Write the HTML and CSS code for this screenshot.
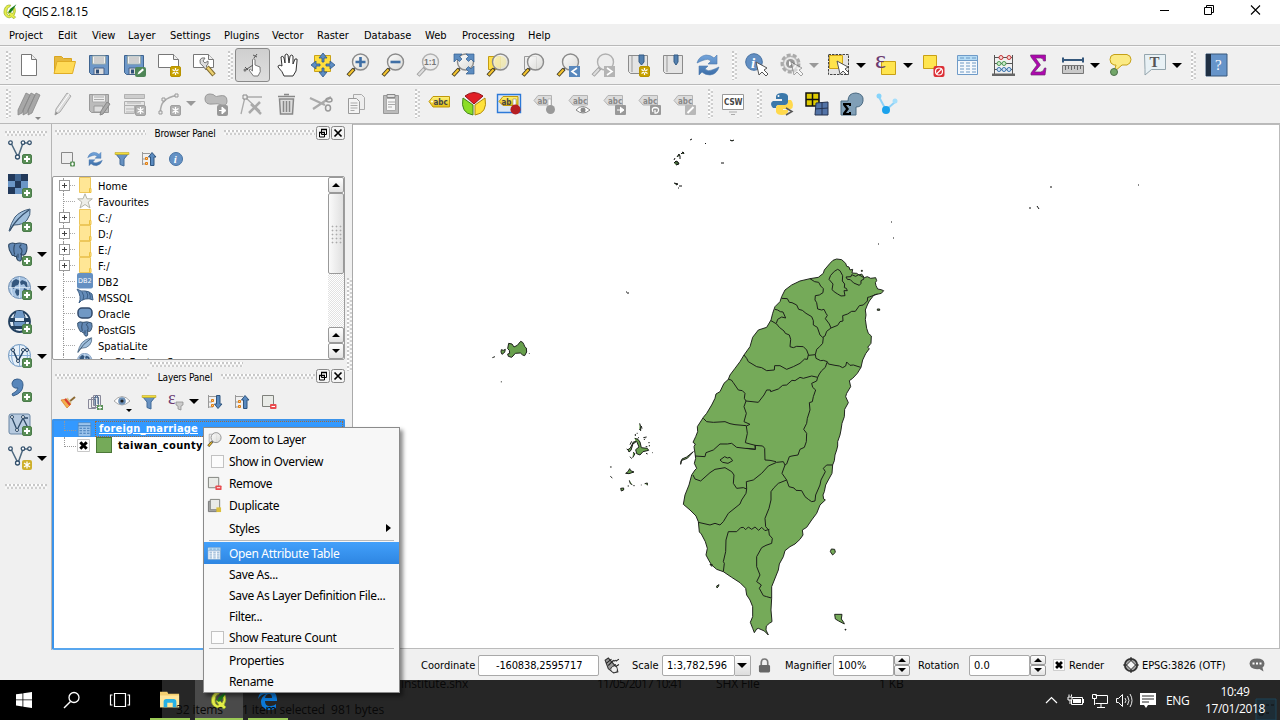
FILE: index.html
```html
<!DOCTYPE html>
<html lang="en">
<head>
<meta charset="utf-8">
<title>QGIS 2.18.15</title>
<link rel="stylesheet" href="styles.css">
</head>
<body>
<svg class="defs" width="0" height="0">
<defs>
<linearGradient id="gGlass" x1="0" y1="0" x2="1" y2="1"><stop offset="0" stop-color="#fff"/><stop offset="1" stop-color="#d4d4d0"/></linearGradient>
<linearGradient id="gTag" x1="0" y1="0" x2="0" y2="1"><stop offset="0" stop-color="#fff27a"/><stop offset="1" stop-color="#e2bd12"/></linearGradient>
<linearGradient id="gArr" x1="0" y1="0" x2="0" y2="1"><stop offset="0" stop-color="#74a5dc"/><stop offset="1" stop-color="#3c6ea8"/></linearGradient>
<symbol id="plus" viewBox="0 0 24 24"><rect x="14.500" y="14.500" width="9" height="9" rx="1.500" fill="#5a8f57" stroke="#4a7c4a"/><path d="M19 16v6M16 19h6" stroke="#fff" stroke-width="2"/></symbol>
<symbol id="star" viewBox="0 0 24 24"><rect x="13.500" y="13.500" width="10" height="10" rx="1.500" fill="#c8a200" stroke="#b89300"/><path d="M18.500 15v7M15.500 16.500l6 4M21.500 16.500l-6 4" stroke="#fff" stroke-width="1.300"/><circle cx="18.500" cy="18.500" r="1" fill="#c8a200"/></symbol>
<symbol id="starg" viewBox="0 0 24 24"><rect x="13.500" y="13.500" width="10" height="10" rx="1.500" fill="#b0b0b0" stroke="#a0a0a0"/><path d="M18.500 15v7M15.500 16.500l6 4M21.500 16.500l-6 4" stroke="#fff" stroke-width="1.300"/></symbol>
<symbol id="loupe" viewBox="0 0 24 24"><path d="M9.500 14.500L7 17" stroke="#444" stroke-width="2"/><path d="M8 16L2 22.500" stroke="#453c20" stroke-width="4"/><path d="M7.500 16.500L2.500 22" stroke="#f4c430" stroke-width="2"/><circle cx="14.500" cy="9" r="8" fill="url(#gGlass)" fill-opacity=".8" stroke="#8b8b8b" stroke-width="1.400"/></symbol>
<symbol id="loupeg" viewBox="0 0 24 24"><path d="M9.500 14.500L2 22.500" stroke="#a0a0a0" stroke-width="4"/><path d="M8 16L2.500 22" stroke="#ddd" stroke-width="2"/><circle cx="14.500" cy="9" r="8" fill="#ededed" stroke="#b0b0b0" stroke-width="1.400"/></symbol>
<symbol id="cursor" viewBox="0 0 24 24"><path d="M11 9l3 13 3-3 4 4 2-2-4-4 3-2z" fill="#fff" stroke="#555"/></symbol>
<symbol id="tag" viewBox="0 0 24 24"><path d="M2 10.500L6 5.500H22.500V16H6z" fill="url(#gTag)" stroke="#c0980a"/><circle cx="5" cy="10.500" r="1" fill="#fff"/></symbol>
<symbol id="tagg" viewBox="0 0 24 24"><path d="M2 8.500L6 3.500H20.500V13H6z" fill="#dcdcdc" stroke="#b4b4b4"/><text x="6" y="11.500" class="tagtext grey">abc</text></symbol>
<symbol id="floppy" viewBox="0 0 24 24"><path d="M2.500 2.500h19v19h-17l-2-2z" fill="#6d97c8" stroke="#3f6490"/><path d="M5.500 3h13v8h-13z" fill="#f2f2f2" stroke="#9aa"/><path d="M7 5h10M7 7h10M7 9h10" stroke="#999" stroke-width=".8"/><path d="M7 15h10v6.500H7z" fill="#ddd" stroke="#46618a"/><path d="M9 16.500h3v4H9z" fill="#304f78"/></symbol>
<symbol id="nodes" viewBox="0 0 24 24"><path d="M3 3l7 14 5-14h6" fill="none" stroke="#4f6a80" stroke-width="1.500"/><g fill="#fff" stroke="#33506c" stroke-width="1.300"><circle cx="2.500" cy="2.700" r="1.800"/><circle cx="15" cy="2.700" r="1.800"/><circle cx="21.500" cy="2.700" r="1.800"/><circle cx="9.500" cy="17" r="2"/></g></symbol>
<symbol id="elephant" viewBox="0 0 24 24"><path d="M1 3Q4 0 9 2q6-2 13 1 2 5-1 11-2 3-5 1v6q-1 3-4 1-2-2-2-5-2 1-3-1-2 1-3-2Q0 8 1 3z" fill="#6389b5" stroke="#2c4763" stroke-width="1.300"/><path d="M8 3q-2 6 0 12M16 3q-4 3 0 5 2 4-1 7M12 14v5" fill="none" stroke="#2f4966" stroke-width="1.300"/></symbol>
<symbol id="feather" viewBox="0 0 24 24"><path d="M1 23q2-8 6-14Q12 3 22 1q1 6-3 11-4 5-13 5-3 3-4 6z" fill="#9fbedb" stroke="#3f5b77"/><path d="M2 22Q9 10 21 2" fill="none" stroke="#36516e" stroke-width="1.300"/></symbol>
<symbol id="globe" viewBox="0 0 24 24"><circle cx="11.500" cy="11.500" r="11" fill="#a9c5e3" stroke="#7290b3"/><path d="M3 6l5-3 4 2-2 4-3 1-1 3-3-2zM14 4l5 2 2 6-3-1-2-3-3 1-1-3zM8 13l4 1-1 5-2 1-2-4zM16 12l4 2-2 5-3-3z" fill="#34577e"/><path d="M1 11.500h21M11.500 1v21M5 3q-4 8 0 17M18 3q4 8 0 17" stroke="#e3edf7" stroke-width=".7" fill="none"/></symbol>
<symbol id="grid" viewBox="0 0 24 24"><path d="M1.500 2.500h20v19h-20z" fill="#f4f8fc" stroke="#6f9bc8"/><path d="M2 3h19v4H2z" fill="#b5dcf5"/><path d="M2 7.500h19" stroke="#6f9bc8"/><path d="M4 10h4M10 10h4M16 10h4M4 13h4M10 13h4M16 13h4M4 16h4M10 16h4M16 16h4M4 19h4M10 19h4M16 19h4M4 5h4M10 5h4M16 5h4" stroke="#6c98c4" stroke-width="1.200"/></symbol>
<symbol id="refresh" viewBox="0 0 24 24"><path d="M1 10q2-7 9-8 5 0 8 3l3-3v9h-9l3-3q-3-3-7-1-3 1-7 3zM23 14q-2 7-9 8-5 0-8-3l-3 3v-9h9l-3 3q3 3 7 1 3-1 7-3z" fill="url(#gArr)" stroke="#4d7aae" stroke-width=".6"/></symbol>
<symbol id="funnel" viewBox="0 0 16 16"><path d="M1.500 2.500h13L10 8v7l-4-1.500V8z" fill="#6791c1" stroke="#426b98"/><path d="M1 1.500h14v2H1z" fill="#f2dd39" stroke="#b69e18" stroke-width=".5"/></symbol>
<symbol id="treeup" viewBox="0 0 16 16"><path d="M1.500 1v13M2 2.500h7M2 8h3M2 13h4" stroke="#999" fill="none"/><path d="M4.500 6.500h2v2h-2zM4.500 11.500h2v2h-2z" fill="#ffd27a" stroke="#e07c14"/><path d="M9.500 14.500V6H7.500L11 1.500 15 6h-2v8.500z" fill="#5a8abf" stroke="#2f557f"/></symbol>
<symbol id="treedown" viewBox="0 0 16 16"><path d="M1.500 1v13M2 2.500h7M2 8h3M2 13h4" stroke="#999" fill="none"/><path d="M4.500 5.500h2v2h-2zM4.500 10.500h2v2h-2z" fill="#ffd27a" stroke="#e07c14"/><path d="M9.500 1.500V10H7.500l3.500 4.500L15 10h-2V1.500z" fill="#5a8abf" stroke="#2f557f"/></symbol>
<symbol id="folder" viewBox="0 0 16 16"><path d="M2.500 .5h11v15h-11z" fill="#ffe695" stroke="#edc75b"/><path d="M12.500 11.500h1.500v4h-1.500z" fill="#ffe695" stroke="#edc13e"/></symbol>
<symbol id="remove" viewBox="0 0 16 16"><path d="M1.500 1.500h11v11h-11z" fill="#e9ebe7" stroke="#7e807b"/><rect x="9" y="10" width="6.500" height="5" rx="1" fill="#e84b4f"/><path d="M10.500 12.500h3.500" stroke="#fff"/></symbol>
<symbol id="floatb" viewBox="0 0 14 14"><rect x=".5" y=".5" width="13" height="13" rx="2" fill="#f4f4f4" stroke="#888"/><path d="M5.500 3.500h5v5h-5zM3.500 6.500h5v4.500h-5z" fill="#f8f8f8" stroke="#000"/><path d="M5 3.500h6M3 6.500h6" stroke="#000" stroke-width="1.500"/></symbol>
<symbol id="closeb" viewBox="0 0 14 14"><rect x=".5" y=".5" width="13" height="13" rx="2" fill="#f4f4f4" stroke="#888"/><path d="M3.500 3.500l7 7M10.500 3.500l-7 7" stroke="#000" stroke-width="1.700"/></symbol>
<symbol id="check" viewBox="0 0 13 13"><path d="M.5.500h12v12H.5z" fill="#fff" stroke="#c8c8c8"/><path d="M3.300 3.300l6.400 6.400M9.700 3.300L3.300 9.700" stroke="#000" stroke-width="3"/></symbol>
<symbol id="qlogo" viewBox="0 0 20 20"><path d="M11 2Q5 1 3 7q-2 7 3 10 3 2 6 0l3 2 2-2-2-2q3-5 1-10l-2 2q1 4-1 6l-3-3-3 1 3 4q-4 1-4-5 0-5 4-6z" fill="#e6ec4a" stroke="#8fad25" stroke-width=".8"/><path d="M18 1l-5 8-3 3-2-1 2-4z" fill="#187b1c"/></symbol>
</defs>
</svg>

<div class="app">
<header class="titlebar">
<svg class="logo" viewBox="0 0 20 20"><use href="#qlogo"/></svg>
<span class="title">QGIS 2.18.15</span>
<svg class="winbtns" viewBox="0 0 110 24"><path d="M6 11.500h9" stroke="#000"/><path d="M50.500 8.500h7v7h-7zM52.500 8V6.500h7v7H58" fill="none" stroke="#000"/><path d="M97 6.500l9 9M106 6.500l-9 9" stroke="#000" stroke-width="1.100"/></svg>
</header>
<nav class="menubar">
<span style="width:49px">Project</span><span style="width:34px">Edit</span><span style="width:36px">View</span><span style="width:42px">Layer</span><span style="width:54px">Settings</span><span style="width:48px">Plugins</span><span style="width:45px">Vector</span><span style="width:47px">Raster</span><span style="width:61px">Database</span><span style="width:37px">Web</span><span style="width:66px">Processing</span><span>Help</span>
</nav>

<div class="toolbar">
<i class="grip first"></i>
<b><svg viewBox="0 0 24 24"><path d="M4.500 1.500h10l5 5v16h-15z" fill="#fff" stroke="#777"/><path d="M14.500 1.500v5h5" fill="#eee" stroke="#777"/></svg></b>
<b><svg viewBox="0 0 24 24"><path d="M2.500 20V3.500h7l2 2h8V10" fill="#e6b93e" stroke="#d9a520"/><path d="M2 20.500L5 8.500h18.500l-3 12z" fill="#ffdb58" stroke="#e0ad25"/></svg></b>
<b><svg viewBox="0 0 24 24"><use href="#floppy"/></svg></b>
<b><svg viewBox="0 0 24 24"><use href="#floppy"/><rect x="13" y="14" width="11" height="10" rx="2" fill="#4f8657"/><path d="M15.500 21.500l1-2.500 4-3.500 1.500 1.500-4 3.500z" fill="#fff"/></svg></b>
<b><svg viewBox="0 0 24 24"><path d="M1.500 1.500h15l5 5v8h-20z" fill="#fff" stroke="#777"/><path d="M16.500 1.500v5h5" fill="#eee" stroke="#777"/><use href="#star"/></svg></b>
<b><svg viewBox="0 0 24 24"><path d="M1.500 1.500h15l5 5v8h-20z" fill="#fff" stroke="#777"/><path d="M16.500 1.500v5h5" fill="#eee" stroke="#777"/><path d="M8 7q1-3 5-2l-2 3 2 2 3-2q1 4-2 5l2 2-2 2-3-4Q7 11 8 7z" fill="#ddd" stroke="#777"/><path d="M15 14l7 8" stroke="#7f6a2e" stroke-width="4.500"/><path d="M15.500 14.500l6 7" stroke="#ecd070" stroke-width="2.500"/></svg></b>
<i class="grip mid"></i>
<b class="on"><svg viewBox="0 0 24 24"><path d="M11.500 15V6.500q1.500-1.500 2.500 0V12l5 2q1.500 5-2 9h-4.500L8 17q1-2 3.500 1z" fill="#fff" stroke="#777"/><path d="M3 18l9-6M13 5l3-4M4 14l3 3M12 2l4 2" stroke="#555" stroke-width="1"/><circle cx="4" cy="17" r="1.500" fill="#777"/></svg></b>
<b><svg viewBox="0 0 24 24"><path d="M8 23q-1-4-6-9 0-3 4-1L5 4q2-2 3 1l1 5V2q2-2 3 0l1 8 1-7q2-2 3 0v8l2-5q3-1 2 2l-1 10-3 5z" fill="#fff" stroke="#333"/></svg></b>
<b><svg viewBox="0 0 24 24"><path d="M3.500 2.500h16v16h-16z" fill="#ffdf3d" stroke="#c9a21a"/><path d="M12 0l4 5h-3v4h-2V5H8zM12 24l4-5h-3v-4h-2v4H8zM0 12l5-4v3h4v2H5v3zM24 12l-5-4v3h-4v2h4v3z" fill="#5c8dc4" stroke="#2d5788" stroke-width=".8"/></svg></b>
<b><svg viewBox="0 0 24 24"><use href="#loupe"/><path d="M14.500 4v10M9.500 9h10" stroke="#3f6fa5" stroke-width="2.600"/></svg></b>
<b><svg viewBox="0 0 24 24"><use href="#loupe"/><path d="M9.500 9h10" stroke="#3f6fa5" stroke-width="2.600"/></svg></b>
<b><svg viewBox="0 0 24 24"><use href="#loupeg"/><text x="8" y="12" class="one">1:1</text></svg></b>
<b><svg viewBox="0 0 24 24"><use href="#loupe"/><path d="M3 1h8L8.500 3.500 11 6 8.500 8.500 6 6 3 9zM23 1v8l-3-3-2.500 2.500L15 6l2.500-2.500L15 1zM23 21v-8l-3 3-2.500-2.500L15 16l2.500 2.500L15 21z" fill="#5c8cc0" stroke="#315c8c" stroke-width=".7"/></svg></b>
<b><svg viewBox="0 0 24 24"><path d="M2.500 3.500h12v13h-12z" fill="#ffe04b" stroke="#c39c12"/><use href="#loupe"/><circle cx="14.500" cy="9" r="6" fill="#f7e98c" opacity=".5"/></svg></b>
<b><svg viewBox="0 0 24 24"><path d="M3.500 3.500h12v13h-12z" fill="#eee" stroke="#999"/><use href="#loupe"/></svg></b>
<b><svg viewBox="0 0 24 24"><use href="#loupe"/><path d="M13 13h11v11H13z" fill="#5988bd"/><path d="M21 15l-5 3.500 5 3.500" fill="none" stroke="#fff" stroke-width="1.600"/></svg></b>
<b><svg viewBox="0 0 24 24"><use href="#loupeg"/><path d="M13 13h11v11H13z" fill="#b4b4b4"/><path d="M16 15l5 3.500-5 3.500" fill="none" stroke="#fff" stroke-width="1.600"/></svg></b>
<b><svg viewBox="0 0 24 24"><path d="M2.500 2.500h19v18h-17l-2-2z" fill="#e4e4e4" stroke="#8b8b8b"/><path d="M6 3v16" stroke="#999"/><path d="M13 2h5v7l-2.500 3L13 9z" fill="#527fae" stroke="#345c86"/><use href="#star"/></svg></b>
<b><svg viewBox="0 0 24 24"><path d="M2.500 2.500h19v18h-17l-2-2z" fill="#e4e4e4" stroke="#8b8b8b"/><path d="M6 3v16" stroke="#999"/><path d="M13 2h4v7l-2 3-2-3z" fill="#527fae" stroke="#345c86"/></svg></b>
<b><svg viewBox="0 0 24 24"><use href="#refresh"/></svg></b>
<i class="grip mid"></i>
<b><svg viewBox="0 0 24 24"><circle cx="9" cy="9" r="8.300" fill="#628fc3" stroke="#4671a2"/><text x="6" y="14.500" class="info">i</text><use href="#cursor"/></svg></b>
<b><svg viewBox="0 0 24 24"><circle cx="10.500" cy="10.500" r="8.500" fill="#ddd" stroke="#aaa" stroke-width="3" stroke-dasharray="4 2"/><circle cx="10.500" cy="10.500" r="7" fill="#e8e8e8" stroke="#aaa"/><circle cx="10.500" cy="10.500" r="4.500" fill="#999"/><path d="M9 8l4 2.500-4 2.500z" fill="#fff"/><g opacity=".5"><use href="#cursor"/></g></svg></b>
<u class="off"></u>
<b><svg viewBox="0 0 24 24"><path d="M1.500 1.500h20v20h-20z" fill="#e4e4e4" stroke="#444" stroke-dasharray="2.500 1"/><path d="M2.500 2.500h13v13h-13z" fill="#ffe34b" stroke="#d0a315"/><use href="#cursor" x="-1" y="-1"/></svg></b>
<u></u>
<b><svg viewBox="0 0 24 24"><path d="M7.500 8.500h14v13h-14z" fill="#ffe54f" stroke="#c9a015"/><text x="1" y="15" class="eps">ε</text></svg></b>
<u></u>
<b><svg viewBox="0 0 24 24"><path d="M2.500 2.500h13v13h-13z" fill="#ffe54f" stroke="#c9a015"/><rect x="12.500" y="13" width="11" height="11" rx="2" fill="#dc2f36"/><circle cx="18" cy="18.500" r="3.500" fill="none" stroke="#fff" stroke-width="1.200"/><path d="M15.500 21l5-5" stroke="#fff" stroke-width="1.200"/></svg></b>
<b><svg viewBox="0 0 24 24"><use href="#grid"/></svg></b>
<b><svg viewBox="0 0 24 24"><path d="M3.500 2v19M21.500 2v19M3 4.500h19M3 10.500h19M3 16.500h19" stroke="#555"/><path d="M1 20.500h23v2.500H1z" fill="#666"/><g fill="#f6d5d5" stroke="#c63737"><circle cx="10" cy="4.500" r="2"/><circle cx="18" cy="4.500" r="2"/></g><g fill="#cdebcb" stroke="#4b9b53"><circle cx="8" cy="10.500" r="2"/><circle cx="13" cy="10.500" r="2"/></g><g fill="#cfe2f6" stroke="#3d75ad"><circle cx="8" cy="16.500" r="2"/><circle cx="13" cy="16.500" r="2"/><circle cx="18" cy="16.500" r="2"/></g></svg></b>
<b><svg viewBox="0 0 24 24"><path d="M4.500 2h15v6h-2q0-3-3-3h-5l5 7-6 7h6q3 0 4-4h1.500l-1 7h-14v-2l6-8-6-8z" fill="#ae07ae" stroke="#6e2a72" stroke-width=".7"/></svg></b>
<b><svg viewBox="0 0 24 24"><path d="M1.500 12.500h21v8h-21z" fill="#c9c9c9" stroke="#777"/><path d="M4.500 13v4M7.500 13v3M10.500 13v4M13.500 13v3M16.500 13v4M19.500 13v3" stroke="#666"/><path d="M2 7h20M2 4.500v5M22 4.500v5" stroke="#34577b" stroke-width="2"/></svg></b>
<u></u>
<b><svg viewBox="0 0 24 24"><path d="M6 1.500h13q4 1 4 5t-4 5.500h-5L6 19l2-7H6Q2 11 2 6.500T6 1.500z" fill="#fbea84" stroke="#c5a017"/><circle cx="6" cy="19" r="3.500" fill="#72a668" stroke="#4c704c"/></svg></b>
<b><svg viewBox="0 0 24 24"><path d="M1.500 1.500h21v15h-14L2 22V16.500z" fill="#e8f1f5" stroke="#93a4ac"/><text x="6.500" y="14" class="tt">T</text></svg></b>
<u></u>
<i class="grip mid"></i>
<b><svg viewBox="0 0 24 24"><path d="M2 1h21v22H2z" fill="#6694c9" stroke="#38587d"/><path d="M2 1h5v22H2z" fill="#1f2f43"/><text x="11" y="17" class="qm">?</text></svg></b>
</div>

<div class="toolbar second">
<i class="grip first"></i>
<b class="drop"><svg viewBox="0 0 24 24"><path d="M9 1l4 2-8 18-4 2V18zM14 1l4 2-8 18-4 2V18zM19 1l4 2-8 18-4 2V18z" fill="#a7a7a7" stroke="#888" stroke-width=".8"/></svg></b>
<b><svg viewBox="0 0 24 24"><path d="M15 1l4 3L8 20l-5 3 1-6z" fill="#ddd" stroke="#aaa"/><path d="M17 2L5 19" stroke="#fff"/><path d="M3 23l1-3 2 1z" fill="#888"/></svg></b>
<b><svg viewBox="0 0 24 24"><path d="M2.500 2.500h19v18h-17l-2-2z" fill="#bbb" stroke="#999"/><path d="M5.500 3h13v7h-13z" fill="#eee" stroke="#aaa"/><path d="M7 5h10M7 7.500h10" stroke="#aaa"/><path d="M7 14h9v6H7z" fill="#ddd" stroke="#999"/><path d="M20 10l3 2-7 10-3 1 1-4z" fill="#aaa" stroke="#888"/></svg></b>
<b><svg viewBox="0 0 24 24"><path d="M2.500 2.500h20v4h-20zM2.500 9.500h20v4h-20zM2.500 13.500h10v8h-10z" fill="#e6e6e6" stroke="#b0b0b0"/><path d="M2 3h21M3 5h20M5 11h14M4 17h8M4 20h8" stroke="#b5b5b5"/><use href="#starg"/></svg></b>
<b><svg viewBox="0 0 24 24"><path d="M3.500 20Q3 6 20 3.500" fill="none" stroke="#aaa" stroke-width="1.500"/><g fill="#eee" stroke="#999"><path d="M2 19h3v3H2zM5 6h3v3H5zM18 2h3v3h-3z"/></g><use href="#starg"/></svg></b>
<u class="off"></u>
<b><svg viewBox="0 0 24 24"><path d="M1 7q0-5 5-5 4 0 5 2 1 1 4 0 8-2 8 5 0 5-5 4-5-2-9-1-8 1-8-5z" fill="#bbb" stroke="#999"/><rect x="13" y="13" width="11" height="11" rx="2" fill="#999"/><path d="M15 18.500h5M18 15l4 3.500-4 3.500z" fill="#fff" stroke="#fff"/></svg></b>
<b><svg viewBox="0 0 24 24"><path d="M2 22L6 5h17M6 5l15 14" fill="none" stroke="#aaa" stroke-width="1.300"/><path d="M4 3h4v4H4z" fill="#eee" stroke="#888"/><path d="M10 21l11-11M12 12l10 10" stroke="#aaa" stroke-width="2.500"/></svg></b>
<b><svg viewBox="0 0 24 24"><path d="M5.500 7h14l-1 15h-12z" fill="#ddd" stroke="#888" stroke-width="1.500"/><path d="M4 4.500h17M10 2.500h5M9.500 9v11M12.500 9v11M15.500 9v11" stroke="#888" stroke-width="1.500"/></svg></b>
<b><svg viewBox="0 0 24 24"><path d="M1 6l15 7M4 17l18-12" stroke="#aaa" stroke-width="2.200"/><g fill="none" stroke="#999" stroke-width="1.500"><ellipse cx="20" cy="8" rx="3" ry="2"/><ellipse cx="19" cy="16" rx="2.500" ry="3"/></g></svg></b>
<b><svg viewBox="0 0 24 24"><path d="M9.500 2.500h8l3 3v12h-11z" fill="#eee" stroke="#aaa"/><path d="M4.500 6.500h8l3 3v12h-11z" fill="#f4f4f4" stroke="#999"/><path d="M6.500 11h7M6.500 13.500h7M6.500 16h7M6.500 18.500h4" stroke="#aaa"/></svg></b>
<b><svg viewBox="0 0 24 24"><path d="M4.500 3.500h15v18h-15z" fill="#bbb" stroke="#999"/><path d="M7.500 6.500h9v12h-9z" fill="#f6f6f6" stroke="#aaa"/><path d="M8 2.500h8v3H8z" fill="#ddd" stroke="#888"/><path d="M9 10h7M9 12.500h7M9 15h4" stroke="#aaa"/></svg></b>
<i class="grip sm"></i>
<b><svg viewBox="0 0 24 24"><use href="#tag" y="-1"/><text x="6.500" y="13" class="tagtext">abc</text></svg></b>
<b><svg viewBox="0 0 24 24"><path d="M12 12L3 4Q12-3 21 4z" fill="#e11f26" stroke="#8f1216"/><path d="M11 13v10Q-2 21 1 6z" fill="#8bdd25" stroke="#438320"/><path d="M13 13v10Q26 21 23 6z" fill="#ffe23a" stroke="#b08a10"/></svg></b>
<b><svg viewBox="0 0 24 24"><path d="M.5 2.500h23v18H.5z" fill="#dbe7f5" stroke="#2c79d8" stroke-width="1.400"/><path d="M2 9.500l4-5h15v9H6z" fill="url(#gTag)" stroke="#c0980a"/><text x="4.500" y="13" class="tagtext">ab</text><path d="M16 7h3v9h-3z" fill="#fff" stroke="#777" stroke-width=".5"/><circle cx="18.500" cy="17.500" r="5" fill="#b51f22"/></svg></b>
<b><svg viewBox="0 0 24 24"><path d="M2 8.500L6 3.500H19.500V13H6z" fill="#dcdcdc" stroke="#b4b4b4"/><text x="5.500" y="11.500" class="tagtext grey">ab</text><path d="M16 7h3v9h-3z" fill="#fff" stroke="#999" stroke-width=".5"/><circle cx="18.500" cy="17.500" r="4.500" fill="#999"/></svg></b>
<b><svg viewBox="0 0 24 24"><use href="#tagg"/><path d="M9 18q6-7 14 0-7 6-14 0z" fill="#fff" stroke="#888"/><circle cx="16" cy="18" r="2.500" fill="#888"/></svg></b>
<b><svg viewBox="0 0 24 24"><use href="#tagg"/><rect x="13" y="13" width="11" height="10" rx="1" fill="#999"/><path d="M15 18h6M18 15l4 3-4 3" stroke="#fff" fill="#fff"/></svg></b>
<b><svg viewBox="0 0 24 24"><use href="#tagg"/><rect x="13" y="13" width="11" height="10" rx="1" fill="#999"/><path d="M16 20q-2-4 2-4.500 4 0 3.500 3T18 21v-3" stroke="#fff" stroke-width="1.300" fill="none"/></svg></b>
<b><svg viewBox="0 0 24 24"><use href="#tagg"/><rect x="13" y="13" width="11" height="10" rx="1" fill="#b8b8b8"/><path d="M15.500 21l6-6" stroke="#fff" stroke-width="2"/></svg></b>
<i class="grip mid"></i>
<b><svg viewBox="0 0 24 24"><path d="M1.500 2.500h21v15h-21z" fill="#fff" stroke="#999"/><path d="M8 20h8M10 22.500h4" stroke="#aaa"/><text x="3" y="13" class="csw">CSW</text></svg></b>
<i class="grip mid"></i>
<b><svg viewBox="0 0 24 24"><path d="M6 9V4q1-3 6-3t6 3v6q0 3-3 3H9q-3 0-3 3H3q-2-2-2-4t2-3h9V7H6z" fill="#3b78aa"/><path d="M18 8h3q2 2 2 5t-2 4h-8v1h5v2q-1 3-6 3t-6-3v-4q0-3 3-3h6q3 0 3-3z" fill="#ffd94d"/><circle cx="8.500" cy="4" r="1" fill="#fff"/><path d="M16 16l6 3.500-6 3.500" fill="none" stroke="#555" stroke-width="1.500"/></svg></b>
<b><svg viewBox="0 0 24 24"><path d="M1 1h13v13H1z" fill="#dfcb00" stroke="#111" stroke-width="1.500"/><path d="M7.500 1v13M1 7.500h13" stroke="#111" stroke-width="1.500"/><path d="M11 11l12-1v13H10z" fill="#5273a7" stroke="#24324f"/><path d="M17 10v13M10 17l13-1" stroke="#24324f"/></svg></b>
<b><svg viewBox="0 0 24 24"><path d="M1 9h7q0-8 8-8 8 1 7 8-1 6-7 6v8H1z" fill="#809fb7" stroke="#4b6a82"/><path d="M3 11h8v3H9v-1H6l3 4-3 4h3v-1h2v3H3v-2l3-4-3-4z" fill="#000"/></svg></b>
<b><svg viewBox="0 0 24 24"><path d="M4 5l7 13 9-8" fill="none" stroke="#8fd2f7" stroke-width="2"/><circle cx="4" cy="4" r="2.500" fill="#86d4fb"/><circle cx="20" cy="9" r="2.500" fill="#a6dffb"/><circle cx="11" cy="18" r="4" fill="#1ba2ec"/></svg></b>
</div>

<main class="body">
<aside class="side">
<i class="hgrip"></i>
<div><svg viewBox="0 0 24 24"><use href="#nodes"/><use href="#plus"/></svg></div>
<div><svg viewBox="0 0 24 24"><path d="M0 0h20v20H0z" fill="#6b96c6"/><path d="M0 0h7v7H0zM13 0h7v7h-7zM7 7h6v7H7zM0 13h7v7H0z" fill="#22395a"/><path d="M7 0h6v7H7z" fill="#3f648f"/><use href="#plus"/></svg></div>
<div><svg viewBox="0 0 24 24"><use href="#feather"/><use href="#plus"/></svg></div>
<div><svg viewBox="0 0 24 24"><use href="#elephant" width="20" height="20"/><use href="#plus"/></svg><u></u></div>
<div><svg viewBox="0 0 24 24"><use href="#globe"/><use href="#plus"/></svg><u></u></div>
<div><svg viewBox="0 0 24 24"><circle cx="11.500" cy="11.500" r="10.500" fill="#e1edf8" stroke="#23405f" stroke-width="1.800"/><path d="M2 8h5v3H2zM16 8h5v3h-5zM3 16h17v3H4z" fill="#23405f"/><path d="M8 1h7l2 7H6zM6 11h11v5H6z" fill="#6e98c6"/><path d="M8 1Q3 12 8 22M15 1q5 11 0 21M1 11.500h21" fill="none" stroke="#23405f"/><use href="#plus"/></svg></div>
<div><svg viewBox="0 0 24 24"><circle cx="11.500" cy="11.500" r="11" fill="#e8f1f9" stroke="#6a93be"/><path d="M1 11.500h21M11.500 1v21M6 2q-5 9 0 19M17 2q5 9 0 19" fill="none" stroke="#88add4"/><path d="M5 6l5 11 6-11h4" fill="none" stroke="#23405f" stroke-width="1.500"/><g fill="#fff" stroke="#23405f"><circle cx="5" cy="6" r="1.500"/><circle cx="10" cy="17" r="1.500"/><circle cx="15" cy="6" r="1.500"/><circle cx="19" cy="6" r="1.500"/></g><use href="#plus"/></svg><u></u></div>
<div><svg viewBox="0 0 24 24"><path d="M4 5q1-4 5-4 6 0 6 6 0 8-10 11l-1-2q6-3 6-6-6 1-6-5z" fill="#5886ba" stroke="#365e8b"/><use href="#plus"/></svg></div>
<div><svg viewBox="0 0 24 24"><rect x="1" y="2" width="21" height="20" rx="2" fill="#b8cbe0" stroke="#6885a3"/><path d="M4 6l5 12 6-12 6 12M15 6h5" fill="none" stroke="#2e4a66" stroke-width="1.300"/><g fill="#fff" stroke="#2e4a66"><circle cx="4" cy="5" r="1.500"/><circle cx="9" cy="18" r="1.500"/><circle cx="15" cy="5" r="1.500"/></g><use href="#plus"/></svg></div>
<div><svg viewBox="0 0 24 24"><use href="#nodes"/><rect x="14" y="14" width="10" height="10" rx="2" fill="#ceb02c"/><path d="M19 15.500v7M16 17l6 4M22 17l-6 4" stroke="#fff" stroke-width="1.300"/></svg><u></u></div>
<i class="hgrip"></i>
</aside>

<section class="dock">
<div class="dhead"><i class="hgrip"></i><span>Browser Panel</span><i class="hgrip"></i><svg viewBox="0 0 14 14"><use href="#floatb"/></svg><svg viewBox="0 0 14 14"><use href="#closeb"/></svg></div>
<div class="dtools">
<b><svg viewBox="0 0 16 16"><path d="M1.500 1.500h11v11h-11z" fill="#eee" stroke="#888"/><rect x="10" y="10.500" width="5" height="5" rx="1" fill="#5b9259"/><path d="M12.500 11.500v3M11 13h3" stroke="#fff"/></svg></b>
<b><svg viewBox="0 0 24 24"><use href="#refresh"/></svg></b>
<b><svg viewBox="0 0 16 16"><use href="#funnel"/></svg></b>
<b><svg viewBox="0 0 16 16"><use href="#treeup"/></svg></b>
<b><svg viewBox="0 0 16 16"><circle cx="8" cy="8" r="6.500" fill="#6592c5" stroke="#4773a4"/><text x="5.800" y="12" class="info small">i</text></svg></b>
</div>
<div class="tree">
<ul>
<li class="x"><svg viewBox="0 0 16 16"><use href="#folder"/></svg>Home</li>
<li><svg viewBox="0 0 16 16"><path d="M8 .8l2 5h5.300L11.200 9l1.800 6-5-3.500L3 15l1.800-6L.7 5.800H6z" fill="#eeeee8" stroke="#b5b5aa"/></svg>Favourites</li>
<li class="x"><svg viewBox="0 0 16 16"><use href="#folder"/></svg>C:/</li>
<li class="x"><svg viewBox="0 0 16 16"><use href="#folder"/></svg>D:/</li>
<li class="x"><svg viewBox="0 0 16 16"><use href="#folder"/></svg>E:/</li>
<li class="x"><svg viewBox="0 0 16 16"><use href="#folder"/></svg>F:/</li>
<li><svg viewBox="0 0 16 16"><rect width="16" height="15.500" rx="2" fill="#6590c2"/><text x="1" y="9.500" class="db2">DB2</text></svg>DB2</li>
<li><svg viewBox="0 0 16 16"><path d="M0 0q4 3 8 2 4 0 7 3l1 6q-4-2-8-1-4 1-6 4 3-6-2-14z" fill="#648cb9" stroke="#3c5f86"/><path d="M5 3q3 4 1 8M9 2q3 4 1 8M12 3q2 4 1 7" stroke="#3c5f86" fill="none"/></svg>MSSQL</li>
<li><svg viewBox="0 0 16 16"><rect x="1" y="3" width="14" height="10" rx="4" fill="#7098c4" stroke="#30496b" stroke-width="1.500"/></svg>Oracle</li>
<li><svg viewBox="0 0 24 24"><use href="#elephant"/></svg>PostGIS</li>
<li><svg viewBox="0 0 24 24"><use href="#feather"/></svg>SpatiaLite</li>
<li><svg viewBox="0 0 24 24"><use href="#globe"/></svg>ArcGisFeatureServer</li>
</ul>
<div class="scroll"><em></em><span class="thumb"></span><span class="track"></span><em></em><em class="d"></em></div>
</div>
<div class="split"><i class="hgrip"></i></div>
<div class="dhead low"><i class="hgrip"></i><span>Layers Panel</span><i class="hgrip"></i><svg viewBox="0 0 14 14"><use href="#floatb"/></svg><svg viewBox="0 0 14 14"><use href="#closeb"/></svg></div>
<div class="dtools low">
<b><svg viewBox="0 0 16 16"><path d="M1 6l6-1 4 5-4 4z" fill="#f3b04d" stroke="#d97724" stroke-width=".7"/><path d="M5 5l5 6" stroke="#d93c32" stroke-width="2"/><path d="M9 8l6-5" stroke="#8d6b35" stroke-width="2"/><path d="M7 4l4 5" stroke="#d7c28b" stroke-width="1.500"/></svg></b>
<b><svg viewBox="0 0 16 16"><path d="M6.500 1.500h7v10h-7zM4.500 3.500h7v10h-7zM1.500 5.500h7v9h-7z" fill="#eee" stroke="#889"/><path d="M8 11V3q1.500-2.500 3 0v7" stroke="#365c87" fill="none"/><path d="M10 11h6v5h-6z" fill="#5b9259"/><path d="M13 11.500v4M11 13.500h4" stroke="#fff"/></svg></b>
<b class="drop"><svg viewBox="0 0 16 16"><path d="M0 7q8-9 16 0-8 8-16 0z" fill="#fff" stroke="#aaa"/><circle cx="8" cy="7" r="3.800" fill="#6c8fb5"/><circle cx="8" cy="7" r="1.600" fill="#222"/></svg></b>
<b><svg viewBox="0 0 16 16"><use href="#funnel"/></svg></b>
<b><svg viewBox="0 0 16 16"><text x="0" y="10" class="eps small">ε</text><path d="M8 8h7v3l-2 1v4l-3-1v-3L8 11z" fill="#ccc" stroke="#888" stroke-width=".7"/></svg></b>
<u></u>
<b class="wide"><svg viewBox="0 0 16 16"><use href="#treedown"/></svg></b>
<b><svg viewBox="0 0 16 16"><use href="#treeup"/></svg></b>
<b><svg viewBox="0 0 16 16"><use href="#remove"/></svg></b>
</div>
<div class="layers">
<div class="row sel"><svg viewBox="0 0 24 24"><path d="M2 1h20v22H2z" fill="#9cc4ec" stroke="#4f83b7"/><path d="M2 6h20M4 10h4M10 10h4M16 10h4M4 14h4M10 14h4M16 14h4M4 18h4M10 18h4M16 18h4" stroke="#3f78b4" stroke-width="1.800"/></svg><span>foreign_marriage</span></div>
<div class="row"><svg class="ck" viewBox="0 0 13 13"><use href="#check"/></svg><i class="swatch"></i><span>taiwan_county</span></div>
</div>
</section>
<div class="vsplit"><i class="grip"></i></div>

<svg class="map" viewBox="353 125 926 523">
<g transform="translate(670 250) scale(.33333)" fill="#75aa59" stroke="#1c1f1a" stroke-width="2.900" stroke-linejoin="round">
<path d="M500 27L515 29 527 40 530 49 537 51 540 60 548 58 546 69 560 70 567 75 575 72 583 83 592 80 602 85 617 83 620 92 616 98 618 107 623 117 633 119 641 122 634 130 612 135 598 153 592 165 586 180 588 195 586 208 590 235 595 250 604 258 603 280 593 292 598 296 587 311 578 330 573 352 562 370 548 385 538 392 542 410 530 430 527 440 535 458 524 478 523 500 516 520 513 540 510 555 503 575 503 588 500 600 495 615 493 632 488 645 486 670 475 690 467 705 463 725 459 735 461 747 466 750 450 765 440 790 425 810 410 832 397 840 399 855 390 868 375 882 360 890 345 902 340 920 328 942 325 960 313 990 305 1010 305 1045 303 1080 306 1115 298 1120 289 1128 288 1140 295 1155 283 1143 265 1135 260 1137 253 1148 248 1135 241 1117 248 1100 248 1070 240 1050 230 1035 227 1015 210 998 185 982 160 965 140 958 125 945 117 932 108 915 112 895 106 875 94 852 88 846 85 815 78 798 60 780 40 763 45 735 57 705 65 675 75 660 80 655 73 640 77 625 75 610 72 590 76 582 69 577 77 560 83 545 82 530 95 510 100 502 110 490 125 465 135 445 138 432 150 425 162 400 175 388 180 375 195 355 210 335 222 315 240 290 248 262 265 240 290 232 303 210 308 190 315 170 330 155 335 140 345 120 365 105 390 93 420 86 445 82 460 70 463 60 480 40 489 31z"/>
<g fill="none" stroke-width="3">
<path d="M420 86L434 95 446 97 452 108 460 116 459 128 448 135 436 137 435 150 440 158 443 177 455 180 462 178 468 190 472 196 466 206 478 222 483 234 503 226 510 215 519 213 518 197 533 192 545 184 556 184 568 167 580 165 592 153 593 142 598 141 622 132"/>
<path d="M503 58l-10 6-11 12-5 12 12 14-3 17 9 8 8 5 10 6 12-1-3-15 10 0-3-7-6-2 1-11-7-9 1-16-8-15zM580 82l-14-8-9 5-12-5-2 6-15 1 4 7 9 1 10 10 17 7 5-6v-8l9-5z"/>
<path d="M335 145L352 146 358 157 366 158 380 165 386 178 397 181 408 190 425 200 430 212 430 225 442 232 450 255 458 262 465 258 470 244 483 234M460 262L458 280 449 290 440 298 436 314M315 178l8 2 8 5 8 1 8 18-12-3-12 7-4 12M303 212L320 222 328 232 342 243 346 250 358 255 362 268 360 290 370 293 380 289 400 290 410 300 416 316 436 314"/>
<path d="M415 315L412 328 404 327 390 340 370 350 350 358 330 347 314 347 313 360 290 362 275 353 260 350 235 335 230 325 222 315M436 314L438 325 452 332 460 331 472 335 475 342 495 346 508 348 518 353 527 348 530 336 540 346 550 345 572 352M471 337L466 352 455 362 448 372 443 382 425 378 400 385 390 382 375 392 366 391 350 405 338 406 325 417 302 425 301 420 290 420 282 435 265 457 228 453 223 445 225 430 217 422 205 420 190 398 184 390 175 388"/>
<path d="M443 382L440 393 425 400 428 412 437 420 430 440 427 455 418 458 420 480 412 505 410 520 401 538 410 550 409 575 403 592 390 598 384 615 366 618 358 620 350 642 345 645M228 453L222 470 229 490 222 515 240 523 229 528 232 550 226 578 240 582 256 586 256 598 230 595M100 505L110 515 130 517 165 515 180 521 195 524 229 527"/>
<path d="M75 618L105 620 108 608 130 600 150 582 172 582 185 580 200 592 225 595 256 598 255 586 278 588 284 595 285 630 300 631 318 635M69 675L75 687 92 693 120 668 135 658 165 653 185 665 192 675 190 700 200 715 220 713 230 717 229 695 250 690 275 670 295 648 320 637 340 635 345 645 336 670 350 690 357 710 372 714 378 721 395 722 405 740 415 748 425 755 435 753 437 735 450 705 453 690 466 665 460 655 470 645 488 645"/>
<path d="M350 690L325 700 312 713 303 725 303 750 297 775 285 805 287 830 296 840 298 855 307 865 305 880 288 886 275 893 260 920 260 950 270 975 260 995 274 1005 268 1015 280 1037 290 1040 304 1044M230 717L228 730 215 750 210 762 175 790 160 815 150 825 135 820 120 825 85 817M160 965L163 940 160 935 167 905 168 870 175 845 200 845 212 833 220 832 227 839 235 831 245 838 255 831 266 841 275 832 285 842 298 838"/>
<path d="M150 630l14-10 8 4 8-2 8 10-14 8-16-3z"/>
</g>
<path d="M33 632l19-7 18-20-20 16-14 6-4 16zM140 1008l7-4-2 6-4 4zM484 897l10 1 2 9-8 8-7-10zM494 1093h22l-2 14 7 10 2 5-17-9-10-6zM622 177h7v4h-7zM120 943l7 1-2 5zM574 61h3v3h-3zM525 1138h3v2h-3z"/>
</g>
<g transform="translate(480 330) scale(.33333)" fill="#68a04d" stroke="#1c1f1a" stroke-width="3">
<path d="M86 40l10 2 6 9 10-5 10-12 6 3 4 7 2 6 5 4 1 12-6 11-6-2-7-6-15 1-7 8-4 4-10-3-2-7 6-2-1-9-5-5zM64 59l6 2 6-3-2 9-8 6-3-7zM37 83l8-3"/>
<path d="M64 154v3M148 69v2M479 280l3 10v12l-4-5M470 310h3M464 325l10 3 6 8 4 17 18 2 4 6-17 4-9 10-10-4-3-12 10-8-7-17-10 2-9 18-7 5 3 7 6-5 6-20 8-4M490 323l10-2M492 330l3-4M508 345v4M459 367l6 4-7 12M450 380l5 6M390 411h5M391 439l6 5M437 430l7-5 5-9 3 6 10 4-15 5zM448 451l3 10 6 3M443 468h4M460 467h4M484 464v2M494 461l8-2v7M422 475l9-1v6l-7 3zM516 368h2M484 288l2 8M466 312v6M473 325l4-3M505 338h4M497 350h5M440 357l5 3M498 370l5 2M455 334l-5 10" stroke-width="3"/>
</g>
<g fill="#44683a" stroke="#111" stroke-width="1"><path d="M677 157l2-3 1 2M674 163l2-2 2 1 1 2-3 1M680 159v-3M674 160l1-2M681 154l2-2 1 2M674 183l4 1-2 1M679 186h3M678 188h1M690 140l2-1M682 152l2 1M705 143l1 1M730 140l2 1 2-1M721 163h3M1029 208h2M1037 206l2 3M1050 187h2M1138 185h1M891 222h1M893 238h1M878 244h1M627 293h2M626 292h1"/></g>
</svg>
</main>

<footer class="status">
<span class="w-coord">Coordinate</span><span class="field f-coord">-160838,2595717</span>
<svg class="s-mouse" viewBox="0 0 16 16"><path d="M2 3l3-2 8 9 1 4-4 1-5-4z" fill="#999" stroke="#333"/><path d="M3 6l5-4M5 8l5-5M7 11l5-4M10 4l2-1M12 4l3-2M12 9l3-2" stroke="#222"/><circle cx="10.500" cy="11.500" r="2.500" fill="#eee"/></svg>
<span class="w-scale">Scale</span><span class="field f-scale">1:3,782,596</span><span class="cbtn"><u></u></span>
<svg class="s-lock" viewBox="0 0 14 16"><path d="M3.500 8V5q0-4 3.500-4t3.500 4v3" fill="none" stroke="#777" stroke-width="1.800"/><rect x="1" y="7.500" width="12" height="8" rx="1.500" fill="#666"/></svg>
<span class="w-mag">Magnifier</span><span class="field f-mag">100%</span><span class="spin"><em></em><em class="d"></em></span>
<span class="w-rot">Rotation</span><span class="field f-rot">0.0</span><span class="spin"><em></em><em class="d"></em></span>
<svg class="s-ck" viewBox="0 0 13 13"><use href="#check"/></svg><span class="w-ren">Render</span>
<svg class="s-crs" viewBox="0 0 16 16"><circle cx="8" cy="8" r="6.200" fill="#aaa" stroke="#333" stroke-width="1.800"/><path d="M8 3.500L12.500 8 8 12.500 3.500 8z" fill="#f5f5f5" stroke="#333"/><path d="M8 0v4M8 12v4M0 8h4M12 8h4" stroke="#333" stroke-width="1.200"/></svg><span class="w-epsg">EPSG:3826 (OTF)</span>
<svg class="s-msg" viewBox="0 0 16 16"><path d="M8 1.500q7 0 7.500 5 0 3-2 4l1 4-4-2.500Q1 13 .5 6.500q.5-5 7.500-5z" fill="#6c6c6c"/><path d="M3.500 6.500h2M7 6.500h2M10.500 6.500h2" stroke="#fff" stroke-width="2"/></svg>
</footer>

<footer class="taskbar">
<div class="ghost"><span class="g1">32 items</span><span class="g2">1 item selected&nbsp; 981 bytes</span><span class="g3">institute.shx</span><span class="g4">11/05/2017 10:41</span><span class="g5">SHX File</span><span class="g6">1 KB</span></div>
<div class="tb"><svg viewBox="0 0 16 16"><path d="M0 2.300l6.500-.9v6.100H0zM7.300 1.300L16 0v7.500H7.300zM0 8.300h6.500v6.200L0 13.600zM7.300 8.300H16V16l-8.700-1.300z" fill="#fff"/></svg></div>
<div class="tb"><svg viewBox="0 0 16 16"><circle cx="10" cy="5.500" r="5" fill="none" stroke="#fff" stroke-width="1.300"/><path d="M6.500 9.500L0 16" stroke="#fff" stroke-width="1.500"/></svg></div>
<div class="tb"><svg class="tv" viewBox="0 0 20 16"><path d="M4.500 1.500h11v13h-11zM2.500 3H.5v10h2M17.500 3h2v10h-2" fill="none" stroke="#fff" stroke-width="1.200"/></svg></div>
<div class="tb run exp"><svg class="tbig" viewBox="0 0 22 22"><path d="M0 2h8l1 2h12v15H0z" fill="#f4cf70"/><path d="M0 6h21v13H0z" fill="#ffe69b"/><path d="M4 19v-6q0-3 3-3h8q3 0 3 3v6h-4v-5H8v5z" fill="#27b1e5"/></svg></div>
<div class="tb run act"><svg class="tbig" viewBox="0 0 20 20"><use href="#qlogo"/></svg></div>
<div class="tb run edge"><svg class="tbig" viewBox="0 0 20 20"><path d="M0 9Q1 0 10 0q9 1 9 9v2H7q0 6 6 5 3 0 5-2v4q-3 2-7 2-8-1-8-8 0-5 5-8-5 0-8 5zM7 8h7q0-4-3-4T7 8z" fill="#0b78d6"/></svg></div>
<div class="tray">
<svg viewBox="0 0 95 20"><path d="M1 13l5.500-5.500L12 13" fill="none" stroke="#fff" stroke-width="1.200"/><g transform="translate(-1 0)"><path d="M27.500 7.500h11v7h-11z" fill="none" stroke="#fff"/><path d="M29 9h8v4h-8zM38.500 9h1.500v4h-1.500z" fill="#fff"/><path d="M24 7h4v3h-4zM25 4.500v2M27.500 4.500v2M26 10v4" stroke="#fff" fill="#262626"/></g><path d="M50.500 5.500h12v8h-12M56 14v3M52 17.500h8M47.500 4.500h4v4h-4zM49.500 9v6" fill="#262626" stroke="#fff"/><path d="M71.500 8.500h2l4-4v12l-4-4h-2z" fill="none" stroke="#fff"/><path d="M80 8q2 2.500 0 5M82.500 6q3 4.500 0 9M85 4q4 6.500 0 13" fill="none" stroke="#fff" stroke-width=".9"/></svg>
<svg class="note" viewBox="0 0 16 18"><path d="M0 2h16v12H8l-2 3-2-3H0z" fill="#fff"/><path d="M2 5h12M2 8h12M2 11h7" stroke="#262626"/></svg>
<span class="eng">ENG</span><span class="clock">10:49<br>17/01/2018</span>
</div>
<svg class="ghosticon" viewBox="0 0 22 22"><path d="M1 1h20v21H1z" fill="#1d2d36" stroke="#1c4559"/><path d="M4 7h4v3H4zM11 7h3M16 7h3M4 14h4v3H4zM11 15h3" stroke="#101010" fill="none"/></svg>
</footer>
</div>

<div class="menu">
<div class="mi"><svg viewBox="0 0 24 24"><path d="M3.500 3.500h12v13h-12z" fill="#eee" stroke="#999"/><use href="#loupe"/></svg>Zoom to Layer</div>
<div class="mi"><i class="box"></i>Show in Overview</div>
<div class="mi"><svg viewBox="0 0 16 16"><use href="#remove"/></svg>Remove</div>
<div class="mi dup"><svg viewBox="0 0 16 16"><path d="M1.500 3.500h9v11h-9z" fill="#aaa" stroke="#777"/><path d="M3.500 1.500h10v11h-10z" fill="#e9ebe7" stroke="#7e807b"/><path d="M10 10h5v5h-5z" fill="#dcc03c"/></svg>Duplicate</div>
<div class="mi">Styles<i class="sub"></i></div>
<hr class="up">
<div class="mi hot"><svg viewBox="0 0 24 24"><use href="#grid"/></svg>Open Attribute Table</div>
<div class="mi s">Save As...</div>
<div class="mi s">Save As Layer Definition File...</div>
<div class="mi s">Filter...</div>
<div class="mi s"><i class="box"></i>Show Feature Count</div>
<hr>
<div class="mi s">Properties</div>
<div class="mi s">Rename</div>
</div>
</body>
</html>
```
FILE: styles.css
```css
* { box-sizing: border-box; }
body { margin: 0; width: 1280px; height: 720px; overflow: hidden; background: #f0f0f0; color: #000;
  font: 11px "DejaVu Sans Condensed", "DejaVu Sans", sans-serif; font-stretch: condensed; }
svg { display: block; flex: none; overflow: visible; }
.defs { position: absolute; }
.app { width: 1280px; height: 720px; display: flex; flex-direction: column; }

.titlebar { height: 24px; background: #fff; display: flex; align-items: center; padding-left: 2px; flex: none; }
.logo { width: 16px; height: 17px; margin-right: 4px; margin-top: -2px; }
.title { font: 12px "Open Sans", sans-serif; width: 100px; letter-spacing: -.5px; margin-top: -1px; }
.winbtns { width: 110px; height: 24px; margin-left: 1032px; margin-top: -2px; }

.menubar { height: 21px; display: flex; align-items: center; padding: 2px 0 0 9px; flex: none; white-space: nowrap; }
.toolbar { height: 39px; border-top: 1px solid #b9b9b9; box-shadow: inset 0 1px #fafafa; display: flex; align-items: center; flex: none; }
.toolbar b { width: 35px; height: 34px; display: flex; align-items: center; justify-content: center; flex: none; }
.toolbar b svg { width: 24px; height: 24px; }
.toolbar b.on { border: 1px solid #8a8a8a; border-radius: 3px; background: linear-gradient(#cfcfcf, #dedede); }
.second { border-bottom: 1px solid #b9b9b9; height: 40px; padding-bottom: 1px; }
.drop { position: relative; }
.drop::after { content: ""; position: absolute; right: 5px; bottom: 1px; border: 3px solid transparent; border-top-color: #888; border-bottom: 0; }
.dtools .drop::after { border-top-color: #000; bottom: -2px; right: 3px; }
.grip { width: 5px; height: 29px; flex: none;
  background-image: linear-gradient(#c4c4c4, #c4c4c4), linear-gradient(#fff, #fff), linear-gradient(#c4c4c4, #c4c4c4), linear-gradient(#fff, #fff);
  background-size: 5px 4px; background-image: conic-gradient(from 270deg at 2px 2px, #c8c8c8 90deg, transparent 0), conic-gradient(from 90deg at 3px 2px, #cecece 90deg, transparent 0), linear-gradient(90deg, #fff 0 2px, transparent 0 3px, #f8f8f8 3px); }
.hgrip { height: 5px; flex: 1; background-size: 4px 5px;
  background-image: conic-gradient(from 270deg at 2px 2px, #c8c8c8 90deg, transparent 0), conic-gradient(from 90deg at 2px 3px, #cecece 90deg, transparent 0), linear-gradient(#fff 0 2px, transparent 0 3px, #f8f8f8 3px); }
.grip.first { margin: 0 1px 0 6px; }
.toolbar .grip.first + b { margin-left: -1px; }
.grip.mid { margin: 0 2px 0 7px; }
.grip.sm { margin: 0 1px 0 7px; }
u { width: 12px; display: flex; justify-content: center; flex: none; text-decoration: none; }
u::before { content: ""; border: 5px solid transparent; border-top-color: #000; border-bottom: 0; margin-right: 2px; }
u.off::before { border-top-color: #999; }

.tagtext { font: bold 8px "DejaVu Sans Condensed", sans-serif; fill: #444; }
.grey { fill: #888; }
.one { font: bold 8.500px "Liberation Sans", sans-serif; fill: #777; }
.info { font: italic bold 15px "Liberation Serif", serif; fill: #fff; }
.info.small { font-size: 11px; }
.eps { font: 26px "Liberation Serif", serif; fill: #6b3a71; }
.eps.small { font-size: 18px; }
.tt { font: bold 15px "Liberation Serif", serif; fill: #555; }
.qm { font: 15px "Liberation Serif", serif; fill: #fff; }
.csw { font: bold 8px "DejaVu Sans Condensed", sans-serif; fill: #444; }
.db2 { font: 6.500px "DejaVu Sans", sans-serif; fill: #fff; }

.body { height: 526px; display: flex; flex: none; }
.side { width: 52px; border-right: 1px solid #b5b5b5; display: flex; flex-direction: column; padding-top: 7px; flex: none; }
.side .hgrip { flex: none; width: 42px; margin-left: 5px; }
.side div { height: 34px; padding-left: 8px; display: flex; align-items: center; gap: 5px; }
.side div:nth-of-type(1) { margin-top: -1px; }
.side svg { width: 24px; height: 24px; }
.side .hgrip:last-child { margin-top: 9px; }

.dock { width: 294px; display: flex; flex-direction: column; flex: none; }
.dhead { height: 17px; display: flex; align-items: center; gap: 1px; padding: 0 1px 0 3px; font-size: 10px; letter-spacing: -.2px; flex: none; }
.dhead span { margin: 0 8px; white-space: nowrap; position: relative; top: 1px; }
.dhead svg { width: 14px; height: 14px; }
.dtools { height: 35px; display: flex; align-items: center; padding-left: 2px; flex: none; }
.dtools b { width: 27px; display: flex; justify-content: center; flex: none; }
.dtools svg { width: 16px; height: 16px; }
.dtools b.wide { width: 27px; }
.tree { height: 184px; margin-right: 1px; border: 1px solid #9c9c9c; border-radius: 2px; background: #fff; display: flex; flex: none; overflow: hidden; }
.tree ul { flex: 1; margin: 0; padding: 1px 0 0; list-style: none; }
.tree li { height: 16px; padding-left: 24px; display: flex; align-items: center; gap: 5px; position: relative; }
.tree li svg { width: 16px; height: 16px; margin-top: -2px; }
.tree li::before { content: ""; position: absolute; left: 10px; top: 0; width: 11px; height: 16px; border-left: 1px dotted #999; background: linear-gradient(90deg, #aaa 50%, transparent 50%) 0 7px / 2px 1px repeat-x; }
.tree li.x::after { content: ""; position: absolute; left: 6px; top: 2px; width: 9px; height: 9px; border: 1px solid #999;
  background: linear-gradient(#444, #444) center / 5px 1px no-repeat, linear-gradient(#444, #444) center / 1px 5px no-repeat, #fff; }
.scroll { width: 16px; display: flex; flex-direction: column; flex: none; }
em { display: flex; align-items: center; justify-content: center; border: 1px solid #999; border-radius: 2px; background: linear-gradient(#fff, #e2e2e2); }
em::before { content: ""; border: 4px solid transparent; border-top: 0; border-bottom-color: #000; }
em.d::before { border: 4px solid transparent; border-bottom: 0; border-top-color: #000; }
.scroll em { height: 16px; flex: none; }
.thumb { height: 81px; border: 1px solid #999; border-radius: 2px; background: linear-gradient(90deg, #fafafa, #e0e0e0); position: relative; flex: none; }
.thumb::after { content: ""; position: absolute; left: 2px; top: 31px; width: 11px; height: 20px; background: radial-gradient(circle at 1.500px 1.500px, #aaa .8px, transparent 1.100px) 0 0 / 4px 4px; }
.track { flex: 1; background: repeating-conic-gradient(#e2e2e2 0 25%, #fff 0 50%) 0 0 / 2px 2px; }
.split { height: 8px; display: flex; align-items: center; justify-content: center; flex: none; }
.split .hgrip { flex: none; width: 93px; margin-right: 6px; }
.dhead.low { height: 16px; }
.dtools.low { height: 35px; }
.layers { height: 231px; background: #fff; border: 2px solid #3b93ea; border-bottom-color: #58a6ee; border-radius: 2px; margin-right: 1px; }
.row { height: 16px; display: flex; align-items: center; font-weight: bold; letter-spacing: .32px; position: relative; }
.row::before { content: ""; position: absolute; left: 10px; top: 0; width: 11px; height: 9px; border: 1px dotted #999; border-width: 0 0 1px 1px; }
.row svg { width: 15px; height: 15px; margin-left: 23px; }
.row svg.ck { width: 13px; height: 13px; }
.swatch { width: 16px; height: 16px; background: #75aa59; border: 1px solid #4c7838; margin: 0 6px; }
.sel { background: #3399ff; color: #fff; }
.sel span { margin-left: 3px; padding-left: 3px; width: 248px; border: 1px dotted #a46a38; text-decoration: underline; line-height: 14px; letter-spacing: .2px; }
.vsplit { width: 7px; display: flex; align-items: center; border-right: 1px solid #aaa; flex: none; }
.vsplit .grip { height: 93px; margin-bottom: 126px; margin-left: 1px; }
.map { width: 927px; height: 525px; background: #fff; border: 1px solid #bbb; border-width: 1px 1px 1px 0; }

.status { height: 30px; display: flex; align-items: center; flex: none; white-space: nowrap; }
.field { height: 21px; border: 1px solid #a9a9a9; border-radius: 2px; background: #fff; line-height: 20px; padding-left: 4px; }
.w-coord { margin-left: 421px; width: 57px; }
.f-coord { width: 121px; padding-left: 17px; letter-spacing: -.15px; }
.s-mouse { width: 17px; height: 17px; margin-left: 4px; }
.w-scale { margin-left: 12px; width: 30px; }
.f-scale { width: 73px; }
.cbtn { width: 16px; height: 21px; border: 1px solid #a9a9a9; border-left: 0; border-radius: 0 2px 2px 0; background: linear-gradient(#fff, #ddd); display: flex; align-items: center; }
.cbtn u { width: 16px; }
.s-lock { width: 13px; height: 17px; margin-left: 7px; }
.w-mag { margin-left: 14px; width: 48px; }
.f-mag { width: 61px; }
.spin { width: 16px; display: flex; flex-direction: column; }
.spin em { height: 10.500px; }
.w-rot { margin-left: 8px; width: 51px; }
.f-rot { width: 61px; }
.s-ck { width: 12px; height: 12px; margin-left: 7px; }
.w-ren { margin-left: 4px; width: 54px; }
.s-crs { width: 16px; height: 16px; }
.w-epsg { margin-left: 3px; width: 107px; letter-spacing: -.1px; }
.s-msg { width: 16px; height: 16px; }

.taskbar { height: 40px; background: linear-gradient(90deg, #000 162px, #262626 162px); display: flex; position: relative; flex: none; overflow: hidden; font-family: "Open Sans", sans-serif; color: #fff; font-stretch: normal; }
.tb { width: 48px; display: flex; align-items: center; justify-content: center; flex: none; position: relative; }
.tb svg { width: 16px; height: 16px; }
.tb svg.tv { width: 20px; }
.tb svg.tbig { width: 20px; height: 20px; }
.run::after { content: ""; position: absolute; left: 0; right: 0; bottom: 0; height: 2px; background: #9bc956; }
.exp { width: 40px; margin: 0 5px 0 6px; }
.act { background: rgba(125, 125, 125, .42); margin-right: 5px; }
.edge { width: 40px; }
.ghost span { position: absolute; color: #080808; font-size: 12px; line-height: 16px; white-space: nowrap; letter-spacing: -.1px; z-index: 1; }
.ghost .g1 { left: 176px; top: 22px; }
.ghost .g2 { left: 242px; top: 22px; }
.ghost .g3 { left: 401px; top: -4px; }
.ghost .g4 { left: 597px; top: -4px; letter-spacing: -.75px; }
.ghost .g5 { left: 716px; top: -4px; }
.ghost .g6 { left: 879px; top: -4px; }
.tray { margin-left: auto; display: flex; align-items: center; font-size: 12px; position: relative; z-index: 1; letter-spacing: -.35px; }
.tray svg { width: 95px; height: 20px; }
.tray svg.note { width: 16px; height: 18px; }
.eng { margin-left: 10px; width: 31px; }
.clock { width: 76px; text-align: center; line-height: 17px; margin-right: 7px; }
.ghosticon { position: absolute; right: 3px; bottom: 0; width: 22px; height: 22px; }

.menu { position: absolute; left: 203px; top: 427px; width: 197px; height: 266px; background: #f7f7f7; border: 1px solid #8b8b8b; box-shadow: 3px 3px 4px rgba(0, 0, 0, .45); font: 12px "Noto Sans", sans-serif; font-stretch: normal; letter-spacing: -.34px; }
.mi { height: 22px; display: flex; align-items: center; padding-left: 25px; position: relative; white-space: nowrap; }
.mi.s { height: 21px; }
.mi.dup { height: 23px; }
.mi svg { width: 15px; height: 15px; margin: 0 7px 0 -22px; }
.box { width: 13px; height: 13px; border: 1px solid #c2c2c2; background: #fcfcfc; margin: 0 5px 0 -18px; }
.sub { margin-left: auto; margin-right: 8px; border: 4px solid transparent; border-left: 5px solid #000; border-right: 0; }
.hot { background: linear-gradient(#42a0fb, #2e86e2); color: #fff; }
.menu hr { border: 0; height: 1px; background: #b9b9b9; margin: 0 5px 1px; }
.menu hr.up { margin-top: 1px; }
```
